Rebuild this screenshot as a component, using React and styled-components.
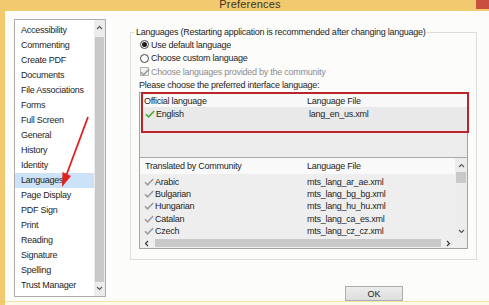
import React from 'react';
import styled, { createGlobalStyle } from 'styled-components';

const GlobalStyle = createGlobalStyle`
  html, body {
    margin: 0;
    padding: 0;
    background: #ffffff;
  }
  body {
    font-family: "Liberation Sans", Arial, sans-serif;
  }
`;

const Window = styled.div`
  position: relative;
  width: 489px;
  height: 305px;
  display: flex;
  flex-direction: column;
  overflow: hidden;
  background: #f1c96f;
  font-size: 9px;
  letter-spacing: -0.25px;
  color: #1e1e1e;
`;

const TitleBar = styled.div`
  height: 11px;
  flex: none;
  display: grid;
  grid-template-columns: 1fr auto 1fr;
  overflow: hidden;
`;

const Title = styled.span`
  grid-column: 2;
  margin-top: -2px;
  padding-left: 11px;
  font-size: 11px;
  line-height: 12px;
  letter-spacing: 0.2px;
  color: #3b3322;
`;

const CloseButton = styled.div`
  grid-column: 3;
  justify-self: end;
  width: 13px;
  height: 9px;
  background: #c9503e;
`;

const Body = styled.div`
  flex: 1;
  display: flex;
  margin-left: 5px;
  background: #fcfcfb;
`;

const BottomBand = styled.div`
  height: 7px;
  flex: none;
  margin-left: 5px;
  background: #fdf9e9;
  border-top: 1px solid #f2e3a8;
`;

const Sidebar = styled.div`
  box-sizing: border-box;
  width: 92px;
  height: 278px;
  margin: 8px 0 0 9px;
  display: flex;
  border: 1px solid #ababab;
  background: #ffffff;
`;

const NavList = styled.div`
  flex: 1;
  padding-top: 3px;
  display: flex;
  flex-direction: column;
`;

const NavItem = styled.div`
  height: 15px;
  line-height: 15px;
  padding-left: 6px;
  background: ${(p) => (p.$active ? '#cce2f6' : 'transparent')};
`;

const VScroll = styled.div`
  width: ${(p) => p.$w || 11}px;
  display: flex;
  flex-direction: column;
  align-items: center;
  background: #ececec;
  padding: ${(p) => p.$pad || '2px 0'};
  box-sizing: border-box;
`;

const Thumb = styled.div`
  width: ${(p) => p.$w || 9}px;
  height: ${(p) => p.$h}px;
  margin: ${(p) => p.$m};
  background: #c9c9c9;
  flex: ${(p) => (p.$grow ? 1 : 'none')};
`;

const Main = styled.div`
  margin-left: 24px;
  width: 347px;
  display: flex;
  flex-direction: column;
`;

const GroupBox = styled.fieldset`
  box-sizing: border-box;
  margin: 16px 0 0 0;
  height: 233px;
  padding: 0 8px;
  min-width: 0;
  border: 1px solid #dddddd;
`;

const Legend = styled.legend`
  padding: 0 2px;
  margin-left: -5px;
  line-height: 11px;
`;

const OptionRow = styled.div`
  height: 13.5px;
  display: flex;
  align-items: center;
  gap: 2px;
  padding-left: 1px;
  color: ${(p) => (p.$disabled ? '#8c8c8c' : '#1e1e1e')};
`;

const Radio = styled.span`
  box-sizing: border-box;
  width: 9px;
  height: 9px;
  border-radius: 50%;
  border: 1px solid #444;
  background: #fff;
  display: flex;
  align-items: center;
  justify-content: center;
  &::after {
    content: '';
    width: 5px;
    height: 5px;
    border-radius: 50%;
    background: ${(p) => (p.$checked ? '#1a1a1a' : 'transparent')};
  }
`;

const CheckBox = styled.span`
  box-sizing: border-box;
  width: 9px;
  height: 9px;
  border: 1px solid #b4b4b4;
  background: #f2f2f2;
  display: flex;
  align-items: center;
  justify-content: center;
`;

const Prompt = styled.div`
  height: 13.5px;
  line-height: 13.5px;
`;

const TableBox = styled.div`
  box-sizing: border-box;
  height: 157px;
  width: 329px;
  border: 1px solid #a3a3a3;
  display: flex;
  flex-direction: column;
`;

const OfficialPane = styled.div`
  height: 64px;
  flex: none;
  background: #ededed;
  border-bottom: 1px solid #a9a9a9;
`;

const Highlight = styled.div`
  box-sizing: border-box;
  height: 41px;
  margin: -1px -2px 0 1px;
  border: 2px solid #b8252d;
  background: #e9e9e9;
`;

const Row = styled.div`
  display: grid;
  grid-template-columns: ${(p) => p.$first || 165}px 1fr;
  align-items: center;
  height: ${(p) => p.$h}px;
  padding-left: ${(p) => p.$pad || 2}px;
  background: ${(p) => p.$bg || 'transparent'};
  white-space: nowrap;
`;

const NameCell = styled.span`
  display: flex;
  align-items: center;
  gap: 1px;
`;

const CommunityPane = styled.div`
  flex: 1;
  display: grid;
  grid-template-columns: 1fr 12px;
  grid-template-rows: 1fr 10px;
  overflow: hidden;
`;

const CommunityList = styled.div`
  background: #eeeeee;
  overflow: hidden;
  display: flex;
  flex-direction: column;
`;

const HScroll = styled.div`
  display: flex;
  align-items: center;
  background: #efefef;
  padding: 0 3px 0 4px;
  gap: 4px;
`;

const Corner = styled.div`
  background: #efefef;
`;

const ButtonRow = styled.div`
  display: flex;
  padding: 26px 0 0 215px;
`;

const OkButton = styled.button`
  box-sizing: border-box;
  width: 58px;
  height: 15px;
  padding: 0;
  border: 1px solid #adadad;
  background: linear-gradient(#ececec, #dedede);
  font-family: inherit;
  font-size: 9px;
  color: #1e1e1e;
`;

const ArrowOverlay = styled.svg`
  position: absolute;
  left: 55px;
  top: 110px;
`;

const Chevron = ({ dir, color = '#555' }) => {
  const d = {
    up: 'M1 4 L3.5 1.5 L6 4',
    down: 'M1 2 L3.5 4.5 L6 2',
    left: 'M4 1 L1.5 3.5 L4 6',
    right: 'M2 1 L4.5 3.5 L2 6',
  }[dir];
  return (
    <svg width="7" height="7" viewBox="0 0 7 7" style={{ flex: 'none' }}>
      <path d={d} fill="none" stroke={color} strokeWidth="1.1" />
    </svg>
  );
};

const Check = ({ color }) => (
  <svg width="10" height="8" viewBox="0 0 10 8" style={{ flex: 'none' }}>
    <path d="M1 4.2 L3.6 6.8 L9.2 1" fill="none" stroke={color} strokeWidth="1.6" />
  </svg>
);

const navItems = [
  'Accessibility', 'Commenting', 'Create PDF', 'Documents', 'File Associations',
  'Forms', 'Full Screen', 'General', 'History', 'Identity', 'Languages',
  'Page Display', 'PDF Sign', 'Print', 'Reading', 'Signature', 'Spelling', 'Trust Manager',
];

const community = [
  ['Arabic', 'mts_lang_ar_ae.xml'],
  ['Bulgarian', 'mts_lang_bg_bg.xml'],
  ['Hungarian', 'mts_lang_hu_hu.xml'],
  ['Catalan', 'mts_lang_ca_es.xml'],
  ['Czech', 'mts_lang_cz_cz.xml'],
];

export default function App() {
  return (
    <Window>
      <GlobalStyle />
      <TitleBar>
        <Title>Preferences</Title>
        <CloseButton />
      </TitleBar>
      <Body>
        <Sidebar>
          <NavList>
            {navItems.map((item) => (
              <NavItem key={item} $active={item === 'Languages'}>{item}</NavItem>
            ))}
          </NavList>
          <VScroll $pad="5px 0 4px">
            <Chevron dir="up" />
            <Thumb $grow $w={9} $m="5px 0 3px" />
            <Chevron dir="down" />
          </VScroll>
        </Sidebar>

        <Main>
          <GroupBox>
            <Legend>Languages (Restarting application is recommended after changing language)</Legend>
            <OptionRow><Radio $checked />Use default language</OptionRow>
            <OptionRow><Radio />Choose custom language</OptionRow>
            <OptionRow $disabled>
              <CheckBox><Check color="#9a9a9a" /></CheckBox>
              Choose languages provided by the community
            </OptionRow>
            <Prompt>Please choose the preferred interface language:</Prompt>

            <TableBox>
              <OfficialPane>
                <Highlight>
                  <Row $h={13} $bg="#f8f8f8" $pad={1} $first={163}>
                    <span>Official language</span>
                    <span>Language File</span>
                  </Row>
                  <Row $h={14} $pad={0} $first={164}>
                    <NameCell><Check color="#4fa93a" />English</NameCell>
                    <span>lang_en_us.xml</span>
                  </Row>
                </Highlight>
              </OfficialPane>

              <CommunityPane>
                <CommunityList>
                  <Row $h={16} $bg="#f9f9f9" $pad={5} $first={162}>
                    <span>Translated by Community</span>
                    <span>Language File</span>
                  </Row>
                  <div style={{ height: 1.5 }} />
                  {community.map(([name, file]) => (
                    <Row key={name} $h={12.4} $pad={4} $first={163}>
                      <NameCell><Check color="#9c9c9c" />{name}</NameCell>
                      <span>{file}</span>
                    </Row>
                  ))}
                </CommunityList>
                <VScroll $w={12} $pad="5px 0 3px">
                  <Chevron dir="up" />
                  <Thumb $w={10} $h={11} $m="2px 0 0" />
                  <div style={{ flex: 1 }} />
                  <Chevron dir="down" />
                </VScroll>
                <HScroll>
                  <Chevron dir="left" color="#333" />
                  <Thumb $grow $h={8} />
                  <Chevron dir="right" color="#333" />
                </HScroll>
                <Corner />
              </CommunityPane>
            </TableBox>
          </GroupBox>

          <ButtonRow>
            <OkButton>OK</OkButton>
          </ButtonRow>
        </Main>
      </Body>
      <BottomBand />

      <ArrowOverlay width="40" height="82" viewBox="0 0 40 82">
        <path d="M33 7 L11 66" stroke="#e0201c" strokeWidth="1.8" fill="none" />
        <path d="M7 77 L7.5 62 L16 66 Z" fill="#e0201c" />
      </ArrowOverlay>
    </Window>
  );
}
